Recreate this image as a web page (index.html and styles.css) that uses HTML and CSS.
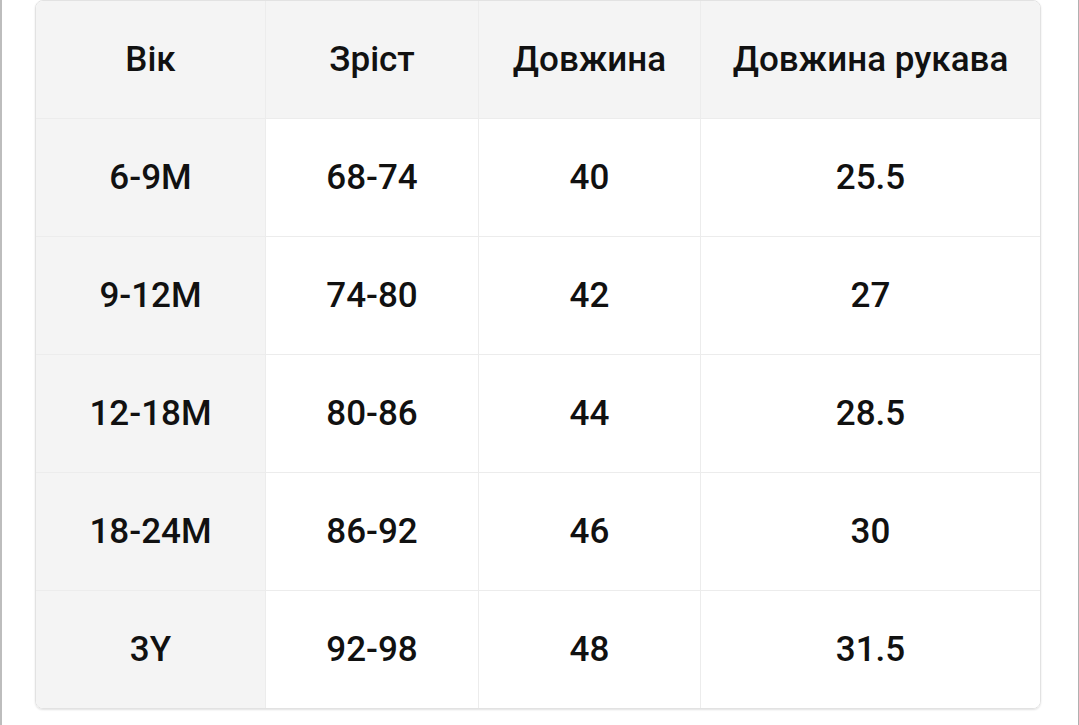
FILE: index.html
```html
<!DOCTYPE html>
<html lang="uk">
<head>
<meta charset="utf-8">
<title>Розмірна сітка</title>
<link rel="stylesheet" href="styles.css">
</head>
<body>
<div class="page">
  <div class="card">
    <table class="sizes">
      <thead>
        <tr><th>Вік</th><th>Зріст</th><th>Довжина</th><th>Довжина рукава</th></tr>
      </thead>
      <tbody>
        <tr><th>6-9M</th><td>68-74</td><td>40</td><td>25.5</td></tr>
        <tr><th>9-12M</th><td>74-80</td><td>42</td><td>27</td></tr>
        <tr><th>12-18M</th><td>80-86</td><td>44</td><td>28.5</td></tr>
        <tr><th>18-24M</th><td>86-92</td><td>46</td><td>30</td></tr>
        <tr><th>3Y</th><td>92-98</td><td>48</td><td>31.5</td></tr>
      </tbody>
    </table>
  </div>
</div>
</body>
</html>
```
FILE: styles.css
```css
html, body {
  margin: 0;
  padding: 0;
  background: #ffffff;
}
.page {
  width: 1079px;
  height: 725px;
  box-sizing: border-box;
  border-left: 2px solid #bdbdbd;
  border-right: 1px solid #b0b0b0;
  padding-left: 33px;
  font-family: Roboto, "Liberation Sans", sans-serif;
  color: #111111;
}
.card {
  width: 1006px;
  box-sizing: border-box;
  border: 1px solid #e2e2e2;
  border-radius: 8px;
  overflow: hidden;
  box-shadow: 0 1px 2px rgba(0,0,0,0.12);
}
.sizes {
  width: 100%;
  border-collapse: collapse;
  table-layout: fixed;
}
.sizes th, .sizes td {
  height: 117px;
  padding: 0;
  text-align: center;
  vertical-align: middle;
  font-size: 35px;
  border: 1px solid #ececec;
  background: #ffffff;
}
.sizes th {
  font-weight: 500;
  background: #f4f4f4;
}
.sizes td {
  font-weight: 500;
}
.sizes tr:first-child > * { border-top: none; }
.sizes tr > *:first-child { border-left: none; }
.sizes tr > *:last-child { border-right: none; }
.sizes tbody tr:last-child > * { border-bottom: none; }
.sizes thead th:nth-child(1) { width: 229px; }
.sizes thead th:nth-child(2) { width: 212px; }
.sizes thead th:nth-child(3) { width: 221px; }
```
